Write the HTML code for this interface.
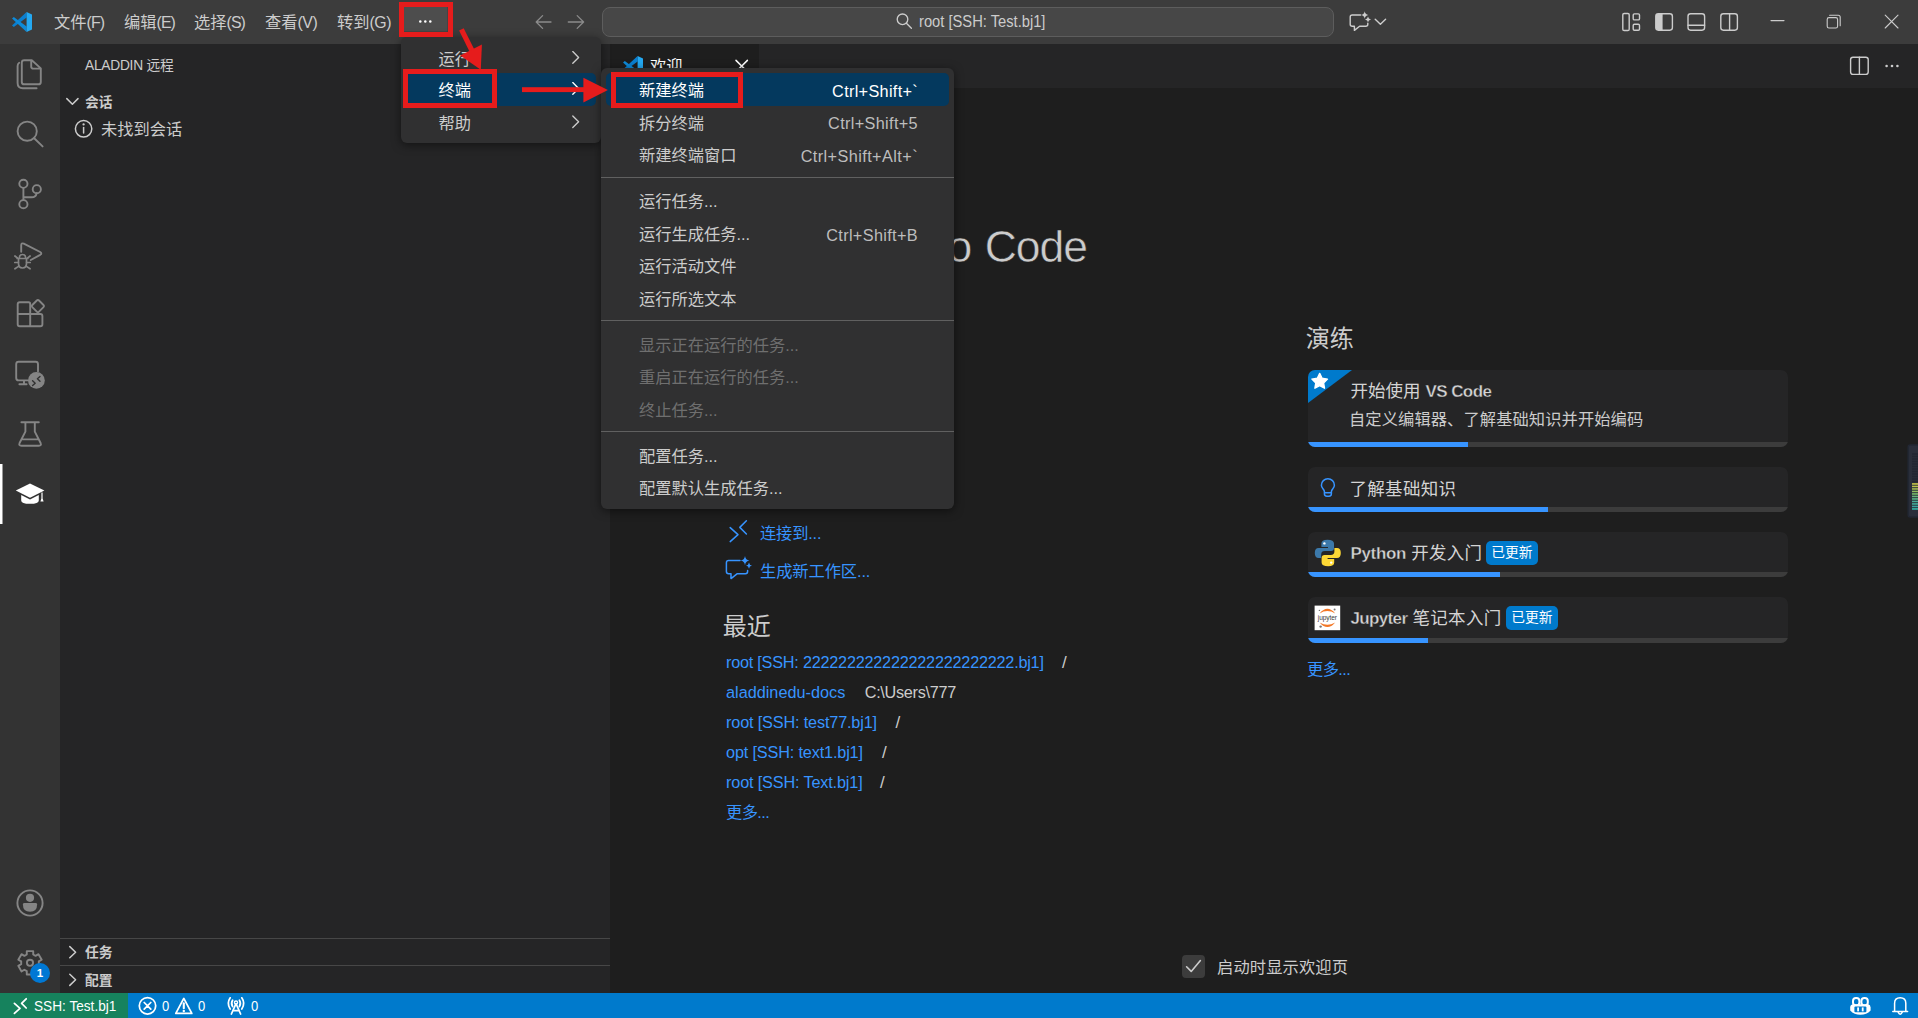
<!DOCTYPE html>
<html lang="zh-CN">
<head>
<meta charset="utf-8">
<title>欢迎 - root [SSH: Test.bj1] - Visual Studio Code</title>
<style>
*{box-sizing:border-box;margin:0;padding:0}
html,body{width:1918px;height:1018px;overflow:hidden;background:#1e1e1e}
body{position:relative;font-family:"Liberation Sans","Noto Sans CJK SC",sans-serif;font-size:16.25px;color:#cccccc;-webkit-font-smoothing:antialiased}
.abs{position:absolute}
.t{position:absolute;white-space:nowrap;line-height:24px;height:24px}
svg{position:absolute;overflow:visible}
/* ---------- title bar ---------- */
#titlebar{position:absolute;left:0;top:0;width:1918px;height:44px;background:#3c3c3c}
#titlebar .mi{position:absolute;top:10px;height:24px;line-height:24px;font-size:16.25px;color:#cccccc;white-space:nowrap}
#cmd{position:absolute;left:602px;top:7px;width:732px;height:30px;border:1px solid #5d5d5d;border-radius:8px;background:#474747}
/* ---------- activity bar ---------- */
#activity{position:absolute;left:0;top:44px;width:60px;height:949px;background:#333333}
/* ---------- sidebar ---------- */
#sidebar{position:absolute;left:60px;top:44px;width:550px;height:949px;background:#252526}
.pane-line{position:absolute;left:0;width:550px;height:1px;background:#474747}
/* ---------- editor ---------- */
#tabs{position:absolute;left:610px;top:44px;width:1308px;height:44px;background:#252526}
#tab{position:absolute;left:0;top:0;width:149px;height:44px;background:#1e1e1e}
#editor{position:absolute;left:610px;top:88px;width:1308px;height:905px;background:#1e1e1e}
.link{color:#3794ff}
.card{position:absolute;left:1308px;width:480px;background:#252526;border-radius:7px;overflow:hidden}
.card .pbg{position:absolute;left:0;bottom:0;width:100%;height:5px;background:#3c3c3c}
.card .pfg{position:absolute;left:0;bottom:0;height:5px;background:#3794ff}
.badge{position:absolute;height:24px;line-height:24px;border-radius:5px;background:#007acc;color:#fff;font-size:13.75px;text-align:center;white-space:nowrap}
/* ---------- status bar ---------- */
#status{position:absolute;left:0;top:993px;width:1918px;height:25px;background:#007acc;color:#fff}
#remote{position:absolute;left:0;top:0;width:128px;height:25px;background:#16825d}
#status .t{font-size:15.5px;color:#fff;line-height:25px;height:25px;top:0}
/* ---------- menus ---------- */
.menu{position:absolute;background:#303031;border-radius:6px;box-shadow:0 2px 10px rgba(0,0,0,.5)}
.menu .sel{position:absolute;background:#04395e;border-radius:5px}
.menu .row{position:absolute;left:0;margin-top:-0.5px;height:24px;line-height:24px;font-size:16.25px;color:#cccccc;white-space:nowrap}
.menu .kb{position:absolute;height:24px;line-height:24px;font-size:16.25px;color:#bdbdbd;white-space:nowrap;text-align:right}
.menu .dis{color:#6f6f6f}
.menu .sep{position:absolute;left:0;width:100%;height:1px;background:#606060}
.redbox{position:absolute;border:5px solid #e61c1c}
</style>
<style id="fit">
.la{font-size:15.9px;letter-spacing:-0.9px}
#mi4 .la,#mi5 .la{letter-spacing:-0.45px}
#cmdtxt{font-size:15.9px;transform-origin:0 50%;transform:scaleX(.905);margin-top:-1.5px;margin-left:-1px}
#sbt{letter-spacing:-0.25px}
#sb1,#sb3,#sb4{margin-top:1px}
#st1{font-size:15.3px;transform-origin:0 50%;transform:scaleX(.88);margin-top:-0.3px;margin-left:0.3px}
#st2,#st3,#st4{font-size:15.3px;transform-origin:0 50%;transform:scaleX(.84);margin-top:-0.3px}
#r1{letter-spacing:-0.235px}
#r2p{letter-spacing:-0.29px}
#r3{letter-spacing:-0.16px}
#r4{letter-spacing:-0.158px}
#r5{letter-spacing:-0.16px}
#r1p,#r3p,#r4p,#r5p{font-size:17px}
#rmore,#wmore{letter-spacing:-0.6px}
#l_conn{letter-spacing:-0.18px;margin-left:-0.5px}
#l_gen{letter-spacing:-0.09px;margin-left:-0.5px}
#hrecent,#hwalk{font-size:24.9px;margin-left:-1.3px;margin-top:0.8px}
#c1t,#c2t,#c3t,#c4t{font-size:17.5px}
#c1d{letter-spacing:0.1px;margin-left:-1.5px}
#chk{letter-spacing:0.14px}
#m1r1,#m1r2{letter-spacing:-0.2px}
#m1r1,#m1r2,#m1r3{margin-top:0}
#m2k1{letter-spacing:0.31px}
#m2k2{letter-spacing:0.345px}
#m2k3{letter-spacing:0.42px}
#m2k5{letter-spacing:0.35px}
#h1c{letter-spacing:-1.03px}
#h1{-webkit-text-stroke:0.55px #1e1e1e;font-size:44.5px !important}
#r2,#r2p{margin-top:-0.5px}
#r1p,#r3p,#r4p,#r5p{margin-top:0.5px}
#c1t b{letter-spacing:-0.55px;font-size:17px}
#c3t{letter-spacing:.3px}
#c3t b{letter-spacing:-0.35px;font-size:17px}
#c4t{letter-spacing:.3px}
#c4t b{letter-spacing:-0.65px;font-size:17px}
#c2t{letter-spacing:0.3px;margin-left:-1px}
#c1t,#c2t{margin-top:0.8px}
.card b{-webkit-text-stroke:0.35px #252526}
</style>
</head>
<body>

<!-- ================= TITLE BAR ================= -->
<div id="titlebar">
  <svg style="left:12px;top:12px" width="20" height="20" viewBox="0 0 100 100">
    <polygon points="0,67 73,0 73,27 9,75" fill="#0a7fd0"/>
    <polygon points="0,33 9,25 73,73 73,100" fill="#0e8ad8"/>
    <polygon points="73,0 100,13 100,87 73,100" fill="#24a9f2"/>
  </svg>
  <div class="mi" id="mi1" style="left:54px">文件<span class="la">(F)</span></div>
  <div class="mi" id="mi2" style="left:124px">编辑<span class="la">(E)</span></div>
  <div class="mi" id="mi3" style="left:194px">选择<span class="la">(S)</span></div>
  <div class="mi" id="mi4" style="left:265px">查看<span class="la">(V)</span></div>
  <div class="mi" id="mi5" style="left:337px">转到<span class="la">(G)</span></div>
  <div id="cmd"></div>
</div>

<!-- ================= ACTIVITY BAR ================= -->
<div id="activity"></div>

<!-- ================= SIDEBAR ================= -->
<div id="sidebar">
  <div class="t" id="sbt" style="left:25px;top:10px;font-size:13.75px;color:#cccccc">ALADDIN 远程</div>
  <div class="t" id="sb1" style="left:25px;top:46px;font-size:13.75px;font-weight:bold;color:#cccccc">会话</div>
  <div class="t" id="sb2" style="left:41px;top:73px;font-size:16.25px;color:#cccccc">未找到会话</div>
  <div class="pane-line" style="top:894px"></div>
  <div class="t" id="sb3" style="left:25px;top:896px;font-size:13.75px;font-weight:bold;color:#cccccc">任务</div>
  <div class="pane-line" style="top:921px"></div>
  <div class="t" id="sb4" style="left:25px;top:924px;font-size:13.75px;font-weight:bold;color:#cccccc">配置</div>
</div>

<!-- ================= EDITOR ================= -->
<div id="tabs"><div id="tab">
  <svg style="left:13px;top:12px" width="20" height="20" viewBox="0 0 100 100">
    <polygon points="0,67 73,0 73,27 9,75" fill="#0a7fd0"/>
    <polygon points="0,33 9,25 73,73 73,100" fill="#0e8ad8"/>
    <polygon points="73,0 100,13 100,87 73,100" fill="#24a9f2"/>
  </svg>
  <div class="t" id="tabtxt" style="left:40px;top:10px;color:#ffffff;font-size:16.25px">欢迎</div>
</div></div>
<div id="editor">
  <!-- coordinates inside #editor are page coords minus (610,88) -->
  <div class="t" id="h1" style="right:831px;top:132.5px;font-size:44px;line-height:52px;height:52px;color:#cccccc">Visual Studio <span id="h1c">Code</span></div>
  <div class="t" id="sub" style="left:115px;top:186px;font-size:25px;line-height:34px;height:34px;color:#9d9d9d">编辑进化</div>
  <div class="t" id="hstart" style="left:114px;top:236px;font-size:24px;line-height:30px;height:30px;color:#cccccc">启动</div>
  <div class="t link" style="left:151px;top:282px">新建文件...</div>
  <div class="t link" style="left:151px;top:312px">打开文件...</div>
  <div class="t link" style="left:151px;top:342px">打开文件夹...</div>
  <div class="t link" style="left:151px;top:372px">克隆 Git 仓库...</div>
  <div class="t link" id="l_conn" style="left:150.5px;top:433px">连接到...</div>
  <div class="t link" id="l_gen" style="left:150.5px;top:471px">生成新工作区...</div>

  <div class="t" id="hrecent" style="left:114px;top:523px;font-size:24px;line-height:30px;height:30px;color:#cccccc">最近</div>
  <div class="t link" id="r1" style="left:116px;top:562px">root [SSH: 222222222222222222222222.bj1]</div>
  <div class="t" id="r1p" style="left:452px;top:562px">/</div>
  <div class="t link" id="r2" style="left:116px;top:592px">aladdinedu-docs</div>
  <div class="t" id="r2p" style="left:254.7px;top:592px">C:\Users\777</div>
  <div class="t link" id="r3" style="left:116px;top:622px">root [SSH: test77.bj1]</div>
  <div class="t" id="r3p" style="left:285.6px;top:622px">/</div>
  <div class="t link" id="r4" style="left:116px;top:652px">opt [SSH: text1.bj1]</div>
  <div class="t" id="r4p" style="left:271.9px;top:652px">/</div>
  <div class="t link" id="r5" style="left:116px;top:682px">root [SSH: Text.bj1]</div>
  <div class="t" id="r5p" style="left:270px;top:682px">/</div>
  <div class="t link" id="rmore" style="left:116px;top:712px">更多...</div>

  <div class="t" id="hwalk" style="left:697px;top:235px;font-size:24px;line-height:30px;height:30px;color:#cccccc">演练</div>
  <div class="t link" id="wmore" style="left:697px;top:569px">更多...</div>

  <div class="abs" style="left:572px;top:867px;width:23px;height:23px;background:#3c3c3c;border-radius:4px"></div>
  <div class="t" id="chk" style="left:607px;top:867px">启动时显示欢迎页</div>
</div>

<!-- walkthrough cards (page coords) -->
<div class="card" style="top:370px;height:77px">
  <svg style="left:0;top:0" width="46" height="34"><polygon points="0,0 44,0 0,33" fill="#007acc"/>
    <polygon fill="#ffffff" stroke="#ffffff" stroke-width="1.4" stroke-linejoin="round" points="11.7,3.4 14.1,8.3 19.5,9.1 15.6,12.9 16.5,18.2 11.7,15.7 6.9,18.2 7.8,12.9 3.9,9.1 9.3,8.3"/></svg>
  <div class="t" id="c1t" style="left:42.5px;top:8px;color:#d4d4d4">开始使用 <b>VS Code</b></div>
  <div class="t" id="c1d" style="left:42.5px;top:37px;color:#cccccc">自定义编辑器、了解基础知识并开始编码</div>
  <div class="pbg"></div><div class="pfg" style="width:160px"></div>
</div>
<div class="card" style="top:467px;height:45px">
  <div class="t" id="c2t" style="left:42.5px;top:9px;color:#d4d4d4">了解基础知识</div>
  <div class="pbg"></div><div class="pfg" style="width:240px"></div>
</div>
<div class="card" style="top:532px;height:45px">
  <div class="t" id="c3t" style="left:42.5px;top:9px;color:#d4d4d4"><b>Python</b> 开发入门</div>
  <div class="badge" id="b3" style="left:178px;top:9px;width:52px">已更新</div>
  <div class="pbg"></div><div class="pfg" style="width:192px"></div>
</div>
<div class="card" style="top:597px;height:46px">
  <div class="t" id="c4t" style="left:42.5px;top:9px;color:#d4d4d4"><b>Jupyter</b> 笔记本入门</div>
  <div class="badge" id="b4" style="left:198px;top:9px;width:52px">已更新</div>
  <div class="pbg"></div><div class="pfg" style="width:120px"></div>
</div>

<!-- ================= STATUS BAR ================= -->
<div id="status">
  <div id="remote"></div>
  <div class="t" id="st1" style="left:34px">SSH: Test.bj1</div>
  <div class="t" id="st2" style="left:162px">0</div>
  <div class="t" id="st3" style="left:198px">0</div>
  <div class="t" id="st4" style="left:251px">0</div>
</div>

<!-- ================= ICONS ================= -->
<svg id="icons" style="left:0;top:0" width="1918" height="1018" viewBox="0 0 1918 1018" fill="none" stroke-linecap="round" stroke-linejoin="round">
<rect x="404" y="7" width="43.5" height="24.5" fill="#4d4d4d" stroke="none"/>
<g fill="#ffffff" stroke="none"><circle cx="420.3" cy="21.6" r="1.25"/><circle cx="425.3" cy="21.6" r="1.25"/><circle cx="430.3" cy="21.6" r="1.25"/></g>
<g stroke="#8a8a8a" stroke-width="1.3"><path d="M551 22H536.2M542.6 15.6L536.2 22l6.4 6.4"/><path d="M568.3 22H583.6M577.2 15.6L583.6 22l-6.4 6.4"/></g>
<g stroke="#cccccc" stroke-width="1.35"><circle cx="902.5" cy="19.3" r="5.3"/><path d="M906.4 23.2L911.4 28.2"/></g>
<g stroke="#cccccc" stroke-width="1.4"><path d="M1360.6 15H1352.2Q1350.2 15 1350.2 17V24.2Q1350.2 26.2 1352.2 26.2H1354.4V30.4L1359.6 26.2H1365.8Q1367.8 26.2 1367.8 24.2V23.2"/><path d="M1375.2 19.2L1380.4 24.3L1385.6 19.2"/></g>
<g fill="#cccccc" stroke="none"><path d="M1364.7 11.3Q1365.2 14.5 1368.3 15Q1365.2 15.5 1364.7 18.7Q1364.2 15.5 1361.1 15Q1364.2 14.5 1364.7 11.3Z"/><path d="M1368 16.5Q1368.4 19 1371 19.4Q1368.4 19.8 1368 22.3Q1367.6 19.8 1365 19.4Q1367.6 19 1368 16.5Z"/></g>
<g stroke="#cccccc" stroke-width="1.4"><rect x="1622.8" y="13.5" width="6.4" height="17" rx="1.3"/><rect x="1633.2" y="13.9" width="6.3" height="6" rx="1.2"/><rect x="1633.2" y="24.2" width="6.3" height="6" rx="1.2"/><rect x="1655.8" y="13.8" width="16.6" height="16.4" rx="2.6"/><rect x="1688" y="13.8" width="16.6" height="16.4" rx="2.6"/><path d="M1688 25.2H1704.6"/><rect x="1720.8" y="13.8" width="16.6" height="16.4" rx="2.6"/><path d="M1729.6 13.8V30.2"/></g>
<path d="M1658.4 13.8H1662.6V30.2H1658.4Q1655.8 30.2 1655.8 27.6V16.4Q1655.8 13.8 1658.4 13.8Z" fill="#cccccc" stroke="none"/>
<g stroke="#cccccc" stroke-width="1.1"><path d="M1771 20.6H1784"/><rect x="1827.2" y="17.6" width="10.4" height="10.4" rx="1.8"/><path d="M1829.6 15.3H1838.2Q1840.2 15.3 1840.2 17.3V25.8"/><path d="M1885.2 15.2L1898 28M1898 15.2L1885.2 28"/></g>
<g stroke="#cccccc" stroke-width="1.4"><rect x="1850.6" y="57.2" width="17.6" height="17.2" rx="2.4"/><path d="M1859.4 57.2V74.4"/></g>
<g fill="#cccccc" stroke="none"><circle cx="1886.6" cy="66" r="1.3"/><circle cx="1892" cy="66" r="1.3"/><circle cx="1897.4" cy="66" r="1.3"/></g>
<path d="M736 60.4L747.4 71.8M747.4 60.4L736 71.8" stroke="#ffffff" stroke-width="1.5"/>
<g stroke="#858585" stroke-width="1.9">
<path d="M31.8 60.2H24.2Q21.8 60.2 21.8 62.6V81.9Q21.8 84.3 24.2 84.3H38.4Q40.8 84.3 40.8 81.9V68.4L31.8 60.2M31.2 60.6V66.4Q31.2 68.6 33.4 68.6H40.4"/>
<path d="M19.2 62.8Q17.6 63.8 17.6 66V83Q17.6 88.2 22.8 88.2H36.6"/>
<circle cx="27.2" cy="131.2" r="9.6"/><path d="M34.2 138.2L42.6 146.4"/>
<circle cx="23.4" cy="183.8" r="4.1"/><circle cx="36.8" cy="189.2" r="4.1"/><circle cx="23.4" cy="204.2" r="4.1"/><path d="M23.4 187.9V200.1M36.6 193.3Q36 197.2 31.6 197.2H23.4"/>
<path d="M21.2 251.8V245.4Q21.2 242.6 23.8 243.6L40.2 252Q42.4 253.4 40.2 254.8L30.8 260"/>
<g stroke-width="1.7"><path d="M19.3 258.4Q19.3 254.5 22.5 254.5Q25.7 254.5 25.7 258.4M17.2 258.5H27.8M18.5 258.5V263.6Q18.5 268 22.5 268Q26.5 268 26.5 263.6V258.5"/><path d="M17.6 258.2L14.9 256M27.4 258.2L30.1 256M18.4 262.5H14.8M26.6 262.5H30.2M18.9 266.1L14.9 268.8M26.1 266.1L30.1 268.8"/></g>
<path d="M30.2 304V326.2M28.6 302.2H19.7Q17.7 302.2 17.7 304.2V324.2Q17.7 326.2 19.7 326.2H40.4Q42.4 326.2 42.4 324.2V316Q42.4 314 40.4 314H17.7M28.6 302.2Q30.2 302.2 30.2 304"/>
<path d="M36.8 300.5L32.3 305Q31.2 306.1 32.3 307.2L36.8 311.7Q37.9 312.8 39 311.7L43.5 307.2Q44.6 306.1 43.5 305L39 300.5Q37.9 299.4 36.8 300.5Z"/>
<path d="M27.8 380.4H18.6Q16.2 380.4 16.2 378V364.2Q16.2 361.8 18.6 361.8H35.6Q38 361.8 38 364.2V371.4M19.4 384.2H26.6M24 380.6V384"/>
<path d="M21.4 422.2H38.8M25.4 422.2V431.6L19.6 443Q18.4 445.8 21.4 445.8H38.8Q41.8 445.8 40.6 443L34.8 431.6V422.2M22 439.4H38.2"/>
</g>
<circle cx="36.4" cy="380.4" r="8.4" fill="#858585" stroke="none"/>
<path d="M32.6 380.8L35.2 383.2L32.6 385.6M40 376.4L37.4 378.8L40 381.2" stroke="#333333" stroke-width="1.4"/>
<rect x="0" y="464" width="2.5" height="60" fill="#ffffff" stroke="none"/>
<g fill="#ffffff" stroke="none"><path d="M30 483.4L44.4 490.6L30 497.8L15.8 490.6Z"/><path d="M21.2 495V500.4Q21.2 503.8 30 503.8Q38.8 503.8 38.8 500.4V495L30 499.6Z"/><path d="M41.4 492.4H42.6V498.4L43.6 501.6H40.4L41.4 498.4Z"/></g>
<circle cx="30" cy="903" r="12.6" stroke="#858585" stroke-width="1.9"/><circle cx="30" cy="897.8" r="4.1" fill="#858585" stroke="none"/><path d="M22.9 904.4Q22.9 903 24.3 903H35.7Q37.1 903 37.1 904.4Q37.1 911.7 30 911.7Q22.9 911.7 22.9 904.4Z" fill="#858585" stroke="none"/>
<path d="M26.78 954.50 L26.77 951.14 L33.23 951.14 L33.22 954.50 L35.58 955.86 L38.49 954.17 L41.71 959.76 L38.80 961.44 L38.80 964.16 L41.71 965.84 L38.49 971.43 L35.58 969.74 L33.22 971.10 L33.23 974.46 L26.77 974.46 L26.78 971.10 L24.42 969.74 L21.51 971.43 L18.29 965.84 L21.20 964.16 L21.20 961.44 L18.29 959.76 L21.51 954.17 L24.42 955.86 Z" stroke="#858585" stroke-width="1.9"/><circle cx="30" cy="962.8" r="3.1" stroke="#858585" stroke-width="1.9"/>
<circle cx="40" cy="973" r="10" fill="#0078d4" stroke="none"/>
<g stroke="#cccccc" stroke-width="1.5"><path d="M66.8 98.6L72.4 104.2L78 98.6"/><circle cx="83.6" cy="128.8" r="8.2"/><path d="M83.6 127.4V133"/><path d="M69.8 946.6L75.6 952.2L69.8 957.8M69.8 974.2L75.6 979.8L69.8 985.4"/></g>
<circle cx="83.6" cy="124.4" r="1.15" fill="#cccccc" stroke="none"/>
<g stroke="#ffffff" stroke-width="1.75"><path d="M14.4 1003.4L20 1008.4L14.4 1013.4M26.2 998.8L21.6 1003.4L26.2 1008"/>
<circle cx="147.5" cy="1005.8" r="8.2"/><path d="M144.2 1002.5L150.8 1009.1M150.8 1002.5L144.2 1009.1"/>
<path d="M183.8 998.4L175.8 1013.4H191.8Z"/><path d="M183.8 1003.2V1008.2" stroke-width="2.1"/>
<path d="M236 1003.6L231.4 1014M236 1003.6L240.6 1014M233.4 1010.6H238.6"/><path d="M232.6 1006.6Q230.6 1003.4 232.6 1000.2M239.4 1006.6Q241.4 1003.4 239.4 1000.2M230.2 1009Q226.4 1003.4 230.2 997.8M241.8 1009Q245.6 1003.4 241.8 997.8"/>
<path stroke-width="1.5" d="M1894.6 1011.6V1003.2Q1894.6 997.8 1900.2 997.8Q1905.8 997.8 1905.8 1003.2V1011.6M1892.8 1011.6H1907.6M1898 1012Q1900.2 1016.4 1902.4 1012"/>
</g>
<circle cx="183.8" cy="1011" r="1.2" fill="#ffffff" stroke="none"/><circle cx="236" cy="1002.6" r="1.6" fill="none" stroke="#ffffff" stroke-width="1.3"/>
<g stroke="none" fill="#ffffff"><path d="M1850.2 1007.4Q1850.2 1004.8 1853 1004.2H1868Q1870.6 1004.8 1870.6 1007.4V1010.4Q1866.6 1014.8 1860.4 1014.8Q1854.2 1014.8 1850.2 1010.4Z"/></g>
<g stroke="#ffffff" stroke-width="2"><rect x="1853" y="998" width="6.4" height="7.4" rx="3"/><rect x="1861.4" y="998" width="6.4" height="7.4" rx="3"/></g>
<rect x="1854.4" y="1006.4" width="12" height="5.8" rx="1" fill="#007acc" stroke="none"/><rect x="1857.2" y="1007.4" width="1.8" height="4" fill="#ffffff" stroke="none"/><rect x="1861.8" y="1007.4" width="1.8" height="4" fill="#ffffff" stroke="none"/>
<g stroke="#3794ff" stroke-width="1.5"><path d="M730.2 527.6L738 534.6L730.2 541.6M746.4 520.8L739.8 527.4L746.4 534"/>
<path d="M740 560.6H728.6Q726.4 560.6 726.4 562.8V571.6Q726.4 573.8 728.6 573.8H731V578.6L737 573.8H745.4Q747.6 573.8 747.6 571.6V570.4"/>
<path d="M1324.4 491.4C1324.4 489.4 1321.4 488.2 1321.4 485.2A6.5 6.5 0 0 1 1334.4 485.2C1334.4 488.2 1331.4 489.4 1331.4 491.4V493.8Q1331.4 496.2 1329 496.2H1326.8Q1324.4 496.2 1324.4 493.8ZM1324.6 492.8H1331.2"/></g>
<g fill="#3794ff" stroke="none"><path d="M745 556Q745.6 560 749.4 560.6Q745.6 561.2 745 565.2Q744.4 561.2 740.6 560.6Q744.4 560 745 556Z"/><path d="M749 562.4Q749.4 565.2 752 565.6Q749.4 566 749 568.8Q748.6 566 746 565.6Q748.6 565.2 749 562.4Z"/></g>
<path d="M1186.6 966.8L1191.2 971.4L1200.4 960.6" stroke="#cccccc" stroke-width="1.6"/>
<g stroke="none"><path d="M1327.4 539.8Q1321.4 539.8 1321.4 543.6V547H1328V548H1318.6Q1314.8 548 1314.8 553Q1314.8 558 1318.6 558H1321.2V554.4Q1321.2 551 1324.8 551H1331Q1334 551 1334 548V543.6Q1334 539.8 1327.4 539.8Z" fill="#3c79aa"/><path d="M1328.2 566.2Q1334.2 566.2 1334.2 562.4V559H1327.6V558H1337Q1340.8 558 1340.8 553Q1340.8 548 1337 548H1334.4V551.6Q1334.4 555 1330.8 555H1324.6Q1321.6 555 1321.6 558V562.4Q1321.6 566.2 1328.2 566.2Z" fill="#fdd835"/><circle cx="1324.4" cy="543.4" r="1.2" fill="#ffffff"/><circle cx="1331.2" cy="562.6" r="1.2" fill="#ffffff"/></g>
<rect x="1314.6" y="605.6" width="25.6" height="24.6" fill="#ffffff" stroke="none"/>
<g fill="#f37726" stroke="none"><path d="M1319.6 613.4Q1327.4 604.2 1335.2 613.4Q1327.4 608.6 1319.6 613.4Z"/><path d="M1319.6 622.4Q1327.4 631.6 1335.2 622.4Q1327.4 627.2 1319.6 622.4Z"/></g>
<g fill="#767677" stroke="none"><circle cx="1334.6" cy="609.4" r="1"/><circle cx="1320.6" cy="626.6" r="1.2"/><circle cx="1319.4" cy="610.4" r="0.7"/></g>
<rect x="1908.2" y="445" width="12" height="72" rx="2" fill="#2a2e3a" stroke="#222733" stroke-width="1.5"/>
<rect x="1912" y="453.2" width="6" height="1.5" fill="#222631" stroke="none"/><rect x="1912" y="455.7" width="6" height="1.5" fill="#222631" stroke="none"/><rect x="1912" y="458.2" width="6" height="1.5" fill="#222631" stroke="none"/><rect x="1912" y="460.7" width="6" height="1.5" fill="#222631" stroke="none"/><rect x="1912" y="463.2" width="6" height="1.5" fill="#222631" stroke="none"/><rect x="1912" y="465.7" width="6" height="1.5" fill="#222631" stroke="none"/><rect x="1912" y="468.2" width="6" height="1.5" fill="#222631" stroke="none"/><rect x="1912" y="470.7" width="6" height="1.5" fill="#222631" stroke="none"/><rect x="1912" y="473.2" width="6" height="1.5" fill="#222631" stroke="none"/><rect x="1912" y="475.7" width="6" height="1.5" fill="#222631" stroke="none"/><rect x="1912" y="478.2" width="6" height="1.5" fill="#222631" stroke="none"/><rect x="1912" y="480.7" width="6" height="1.5" fill="#222631" stroke="none"/><rect x="1912" y="483.2" width="6" height="1.5" fill="#cfcf4a" stroke="none"/><rect x="1912" y="485.7" width="6" height="1.5" fill="#bcc34c" stroke="none"/><rect x="1912" y="488.2" width="6" height="1.5" fill="#a9c455" stroke="none"/><rect x="1912" y="490.7" width="6" height="1.5" fill="#90bb5e" stroke="none"/><rect x="1912" y="493.2" width="6" height="1.5" fill="#7cc36c" stroke="none"/><rect x="1912" y="495.7" width="6" height="1.5" fill="#69b37a" stroke="none"/><rect x="1912" y="498.2" width="6" height="1.5" fill="#5bbb8a" stroke="none"/><rect x="1912" y="500.7" width="6" height="1.5" fill="#4aa995" stroke="none"/><rect x="1912" y="503.2" width="6" height="1.5" fill="#43b3a0" stroke="none"/><rect x="1912" y="505.7" width="6" height="1.5" fill="#3aa3a0" stroke="none"/><rect x="1912" y="508.2" width="6" height="1.5" fill="#35bdb0" stroke="none"/>
</svg>
<div class="t" style="left:35px;top:961px;width:10px;text-align:center;font-size:11.5px;font-weight:bold;color:#fff">1</div>
<div class="t" id="jup" style="left:1316.4px;top:611.6px;width:22px;height:12px;line-height:12px;text-align:center;font-size:6.6px;letter-spacing:-0.1px;color:#3a3a3a">jupyter</div>
<div class="t" id="cmdtxt" style="left:920px;top:10px;font-size:16.25px;color:#cccccc">root [SSH: Test.bj1]</div>

<!-- ================= MENUS ================= -->
<div id="menus">
<div class="menu" id="menu1" style="left:401px;top:37px;width:200px;height:106px">
  <div class="sel" style="left:2px;top:36px;width:193px;height:33px"></div>
  <div class="row" id="m1r1" style="left:37.6px;top:10px">运行</div>
  <div class="row" id="m1r2" style="left:37.6px;top:41px;color:#ffffff">终端</div>
  <div class="row" id="m1r3" style="left:37.6px;top:74px">帮助</div>
  <svg style="left:0;top:0" width="200" height="106" fill="none" stroke="#cccccc" stroke-width="1.35" stroke-linecap="round" stroke-linejoin="round">
    <path d="M171.8 14.6L177.6 20.4L171.8 26.2"/><path d="M171.8 45.6L177.6 51.4L171.8 57.2" stroke="#ffffff"/><path d="M171.8 79L177.6 84.8L171.8 90.6"/>
  </svg>
</div>
<div class="menu" id="menu2" style="left:601px;top:68px;width:353px;height:441px">
  <div class="sel" style="left:5px;top:5px;width:343px;height:32.5px"></div>
  <div class="row" id="m2r1" style="left:38px;top:10.5px;color:#ffffff">新建终端</div>
  <div class="kb" id="m2k1" style="right:36px;top:10.5px;color:#ffffff">Ctrl+Shift+`</div>
  <div class="row" id="m2r2" style="left:38px;top:43.2px">拆分终端</div>
  <div class="kb" id="m2k2" style="right:36px;top:43.2px">Ctrl+Shift+5</div>
  <div class="row" id="m2r3" style="left:38px;top:75.7px">新建终端窗口</div>
  <div class="kb" id="m2k3" style="right:36px;top:75.7px">Ctrl+Shift+Alt+`</div>
  <div class="sep" style="top:108.5px"></div>
  <div class="row" id="m2r4" style="left:38px;top:121.7px">运行任务...</div>
  <div class="row" id="m2r5" style="left:38px;top:154.5px">运行生成任务...</div>
  <div class="kb" id="m2k5" style="right:36px;top:154.5px">Ctrl+Shift+B</div>
  <div class="row" id="m2r6" style="left:38px;top:186.5px">运行活动文件</div>
  <div class="row" id="m2r7" style="left:38px;top:219.0px">运行所选文本</div>
  <div class="sep" style="top:252.0px"></div>
  <div class="row dis" id="m2r8" style="left:38px;top:265.2px">显示正在运行的任务...</div>
  <div class="row dis" id="m2r9" style="left:38px;top:297.6px">重启正在运行的任务...</div>
  <div class="row dis" id="m2r10" style="left:38px;top:330.3px">终止任务...</div>
  <div class="sep" style="top:362.8px"></div>
  <div class="row" id="m2r11" style="left:38px;top:376.3px">配置任务...</div>
  <div class="row" id="m2r12" style="left:38px;top:408.8px">配置默认生成任务...</div>
</div>
</div>
<!-- red annotation boxes + arrows -->
<div class="redbox" style="left:399px;top:2px;width:53.5px;height:34.5px"></div>
<div class="redbox" style="left:403px;top:69px;width:94px;height:39px"></div>
<div class="redbox" style="left:611px;top:72.4px;width:132px;height:36px"></div>
<svg id="arrows" style="left:0;top:0" width="1918" height="1018" viewBox="0 0 1918 1018">
  <g fill="#e61c1c" stroke="none">
    <polygon points="459.1,30.5 463.7,28.2 474.6,50.1 470,52.4"/>
    <polygon points="460.3,55.4 481.9,44.4 480.8,69.7"/>
    <rect x="522" y="87.2" width="62" height="4.9"/>
    <polygon points="583.4,77.8 607.9,90 583.4,102.4"/>
  </g>
</svg>

</body>
</html>
